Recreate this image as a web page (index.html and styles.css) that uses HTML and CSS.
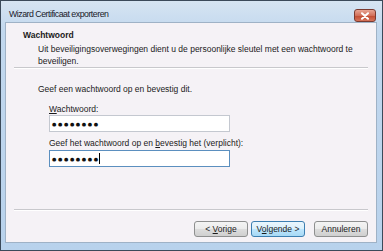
FILE: index.html
```html
<!DOCTYPE html>
<html>
<head>
<meta charset="utf-8">
<link rel="stylesheet" href="styles.css">
</head>
<body>
<div class="window">
  <div class="titlebar">
    <span class="title">Wizard Certificaat exporteren</span>
    <div class="close">
      <svg width="10" height="8" viewBox="0 0 10 8"><path d="M2 1.2 L8 6.8 M8 1.2 L2 6.8" stroke="#fff" stroke-width="2" stroke-linecap="round"/></svg>
    </div>
  </div>
  <div class="client">
    <div class="header">
      <div class="h-title">Wachtwoord</div>
      <div class="h-desc">Uit beveiligingsoverwegingen dient u de persoonlijke sleutel met een wachtwoord te<br>beveiligen.</div>
    </div>
    <div class="sep"></div>
    <div class="content">
      <div class="intro">Geef een wachtwoord op en bevestig dit.</div>
      <div class="form">
        <div class="label lbl1"><u>W</u>achtwoord:</div>
        <div class="field"><span class="dots">●●●●●●●●</span></div>
        <div class="label lbl2">Geef het wachtwoord op en <u>b</u>evestig het (verplicht):</div>
        <div class="field focus"><span class="dots">●●●●●●●●</span><span class="caret"></span></div>
      </div>
    </div>
    <div class="sep bottom"></div>
    <div class="buttons">
      <div class="btn"><span>&lt; <u>V</u>orige</span></div>
      <div class="btn default"><span>V<u>o</u>lgende &gt;</span></div>
      <div class="btn cancel"><span>Annuleren</span></div>
    </div>
  </div>
</div>
</body>
</html>
```
FILE: styles.css
```css
html, body { margin: 0; padding: 0; }
body {
  width: 383px; height: 251px; overflow: hidden;
  font-family: "Liberation Sans", Arial, sans-serif;
  font-size: 8.5px; color: #1b1b1b;
}
.window {
  box-sizing: border-box;
  width: 383px; height: 251px;
  border: 1px solid #3b4a5a;
  background: linear-gradient(#d6e4f2, #c2d8ee 30px, #b8d2ec);
  display: flex; flex-direction: column;
  padding: 0 5px 7px 4px;
}
.titlebar {
  height: 21px; flex: none;
  display: flex; align-items: flex-end; justify-content: space-between;
}
.title { padding-left: 4px; font-size: 8.8px; letter-spacing: -0.5px; color: #1a1a2a; line-height: 12px; margin-bottom: 2px; }
.close {
  width: 22px; height: 13px; margin-right: 1px; margin-bottom: 0;
  box-sizing: border-box;
  border: 1px solid #7a3a30; border-radius: 3px;
  background: linear-gradient(#e8a493, #d2705a 50%, #c04a30 51%, #d6735a);
  display: flex; align-items: center; justify-content: center;
}
.client {
  flex: 1;
  background: #f5f2f6;
  border: 1px solid #9fb2c6;
  display: flex; flex-direction: column;
}
.header { padding: 6px 0 0 17px; line-height: 12px; }
.h-title { font-weight: bold; }
.h-desc { padding-left: 15px; margin-top: 2px; }
.sep {
  height: 1px; background: #c8c8cc; border-bottom: 1px solid #ffffff;
  margin: 0 8px;
}
.content { flex: 1; padding: 14px 0 0 32px; line-height: 12px; }
.form { padding-left: 11px; }
.lbl1 { margin-top: 8px; }
.lbl2 { margin-top: 5px; margin-bottom: 1px; }
.field {
  box-sizing: border-box; width: 181px; height: 17px;
  background: #fff; border: 1px solid #c4c8d0;
  padding-left: 2px; color: #111;
  display: flex; align-items: center;
}
.dots { font-family: "DejaVu Sans", sans-serif; font-size: 5px; letter-spacing: 1.6px; line-height: 10px; }
.field.focus { border-color: #5b8fbf; }
.caret { width: 1px; height: 11px; background: #000; margin-left: -1px; }
.buttons {
  display: flex; justify-content: flex-end;
  padding: 10px 8px 0 0; height: 16px; margin-bottom: 5px;
}
.btn {
  box-sizing: border-box; width: 54px; height: 16px;
  border: 1px solid #8e8f8f; border-radius: 3px;
  background: linear-gradient(#f4f4f4, #ebebeb 50%, #dddddd 51%, #cfcfcf);
  display: flex; align-items: center; justify-content: center;
  margin-left: 3px;
}
.btn.default { border-color: #3c7fb1; background: linear-gradient(#eaf6fd, #d9f0fc 50%, #bee6fd 51%, #a7d9f5); }
.btn.cancel { margin-left: 9px; }
```
